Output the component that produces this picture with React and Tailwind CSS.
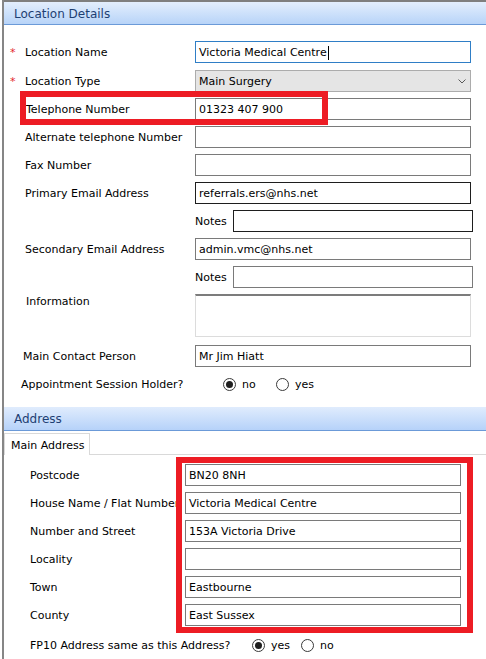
import React from 'react';

const Radio = ({ on }) => (
  <span className="flex h-[13px] w-[13px] shrink-0 items-center justify-center rounded-full border border-[#3a3a3a] bg-white">
    {on && <span className="h-[7px] w-[7px] rounded-full bg-[#1f1f1f]" />}
  </span>
);

const Box = ({ children, className = '' }) => (
  <div className={`flex h-[22px] shrink-0 items-center border bg-white px-[3px] pt-px ${className}`}>{children}</div>
);

const TopRow = ({ label, pad = 'pl-[21px]', star, children, className = '' }) => (
  <div className={`flex h-[22px] items-center ${className}`}>
    <div className={`flex w-[191px] shrink-0 items-center pt-px ${star ? 'pl-[6px]' : pad}`}>
      {star && <span className="w-[15px] text-[#e3262d]">*</span>}
      <span>{label}</span>
    </div>
    {children}
  </div>
);

const AddrRow = ({ label, value, className = '' }) => (
  <div className={`flex h-[22px] items-center ${className}`}>
    <div className="w-[181px] shrink-0 overflow-hidden pt-px pl-[26px] whitespace-nowrap">{label}</div>
    <Box className="w-[276px] border-[#7a7a7a]">{value}</Box>
  </div>
);

const App = () => {
  return (
    <div className="relative h-[659px] w-[486px] overflow-hidden bg-white font-['DejaVu_Sans',sans-serif] text-[11px] leading-[13px] text-black">
      <div className="ml-[2px] flex h-full flex-col border-l-2 border-[#868686]">
        {/* Location details header */}
        <div className="flex h-[25px] shrink-0 items-center border-t-2 border-b border-t-[#7f7f7f] border-b-[#6b9ad8] bg-gradient-to-b from-[#e3eefd] to-[#b8d4f8] pt-[2px] pl-[10px] text-[12px] text-[#1e3f73]">
          Location Details
        </div>

        <div className="flex flex-col pt-[16px]">
          <TopRow label="Location Name" star>
            <Box className="w-[276px] border-[#2f7ec6]">
              <span>Victoria Medical Centre</span>
              <span className="ml-px h-[14px] w-px bg-black" />
            </Box>
          </TopRow>
          <TopRow label="Location Type" star className="mt-[7px]">
            <div className="flex h-[22px] w-[276px] items-center justify-between border border-[#acacac] bg-[#e5e5e5] pt-px pr-[4px] pl-[3px]">
              <span>Main Surgery</span>
              <svg width="8" height="5" viewBox="0 0 8 5">
                <path d="M0.5 0.5 L4 4 L7.5 0.5" fill="none" stroke="#5a5a5a" strokeWidth="1" />
              </svg>
            </div>
          </TopRow>
          <TopRow label="Telephone Number" pad="pl-[22px]" className="mt-[6px]">
            <Box className="w-[276px] border-[#7a7a7a]">01323 407 900</Box>
          </TopRow>
          <TopRow label="Alternate telephone Number" className="mt-[6px]">
            <Box className="w-[276px] border-[#7a7a7a]" />
          </TopRow>
          <TopRow label="Fax Number" className="mt-[6px]">
            <Box className="w-[276px] border-[#7a7a7a]" />
          </TopRow>
          <TopRow label="Primary Email Address" className="mt-[6px]">
            <Box className="w-[276px] border-[#1e1e1e]">referrals.ers@nhs.net</Box>
          </TopRow>
          <div className="mt-[6px] flex h-[22px] items-center pl-[191px]">
            <span className="w-[38px] shrink-0 pt-px">Notes</span>
            <Box className="w-[240px] border-[#1e1e1e]" />
          </div>
          <TopRow label="Secondary Email Address" className="mt-[6px]">
            <Box className="w-[276px] border-[#7a7a7a]">admin.vmc@nhs.net</Box>
          </TopRow>
          <div className="mt-[6px] flex h-[22px] items-center pl-[191px]">
            <span className="w-[38px] shrink-0 pt-px">Notes</span>
            <Box className="w-[240px] border-[#7a7a7a]" />
          </div>
          <div className="mt-[6px] flex items-start">
            <div className="mt-px w-[191px] shrink-0 pl-[22px]">Information</div>
            <div className="h-[43px] w-[276px] border-x border-b border-t-2 border-[#dcdcdc] border-t-[#7c7c7c] bg-white" />
          </div>
          <TopRow label="Main Contact Person" pad="pl-[19px]" className="mt-[8px]">
            <Box className="w-[276px] border-[#7a7a7a]">Mr Jim Hiatt</Box>
          </TopRow>
          <TopRow label="Appointment Session Holder?" pad="pl-[17px]" className="mt-[6px]">
            <div className="ml-[28px] flex items-center">
              <span className="flex w-[53px] items-center gap-[6px]">
                <Radio on />
                <span>no</span>
              </span>
              <span className="flex items-center gap-[6px]">
                <Radio />
                <span>yes</span>
              </span>
            </div>
          </TopRow>
        </div>

        {/* Address header */}
        <div className="mt-[12px] flex h-[24px] shrink-0 items-center border-b border-[#6b9ad8] bg-gradient-to-b from-[#e0ecfd] to-[#b6d2f9] pt-[2px] pl-[10px] text-[12px] text-[#1e3f73]">
          Address
        </div>

        <div className="mt-px flex h-[23px] shrink-0 items-end border-b border-[#d9d9d9]">
          <div className="-mb-px flex h-[22px] w-[86px] items-center border border-b-0 border-[#d9d9d9] bg-white pt-px pl-[6px]">
            Main Address
          </div>
        </div>

        <div className="flex flex-col pt-[9px]">
          <AddrRow label="Postcode" value="BN20 8NH" />
          <AddrRow label="House Name / Flat Number" value="Victoria Medical Centre" className="mt-[6px]" />
          <AddrRow label="Number and Street" value="153A Victoria Drive" className="mt-[6px]" />
          <AddrRow label="Locality" value="" className="mt-[6px]" />
          <AddrRow label="Town" value="Eastbourne" className="mt-[6px]" />
          <AddrRow label="County" value="East Sussex" className="mt-[6px]" />
          <div className="mt-[8px] flex h-[22px] items-center">
            <div className="w-[248px] shrink-0 pt-px pl-[26px]">FP10 Address same as this Address?</div>
            <span className="flex w-[49px] items-center gap-[6px]">
              <Radio on />
              <span>yes</span>
            </span>
            <span className="flex items-center gap-[6px]">
              <Radio />
              <span>no</span>
            </span>
          </div>
        </div>
      </div>

      {/* red highlight boxes */}
      <div className="absolute top-[91px] left-[20px] h-[34px] w-[308px] border-[6px] border-[#ed1c24]" />
      <div className="absolute top-[457px] left-[176px] h-[176px] w-[297px] border-[6px] border-[#ed1c24]" />
    </div>
  );
};

export default App;
